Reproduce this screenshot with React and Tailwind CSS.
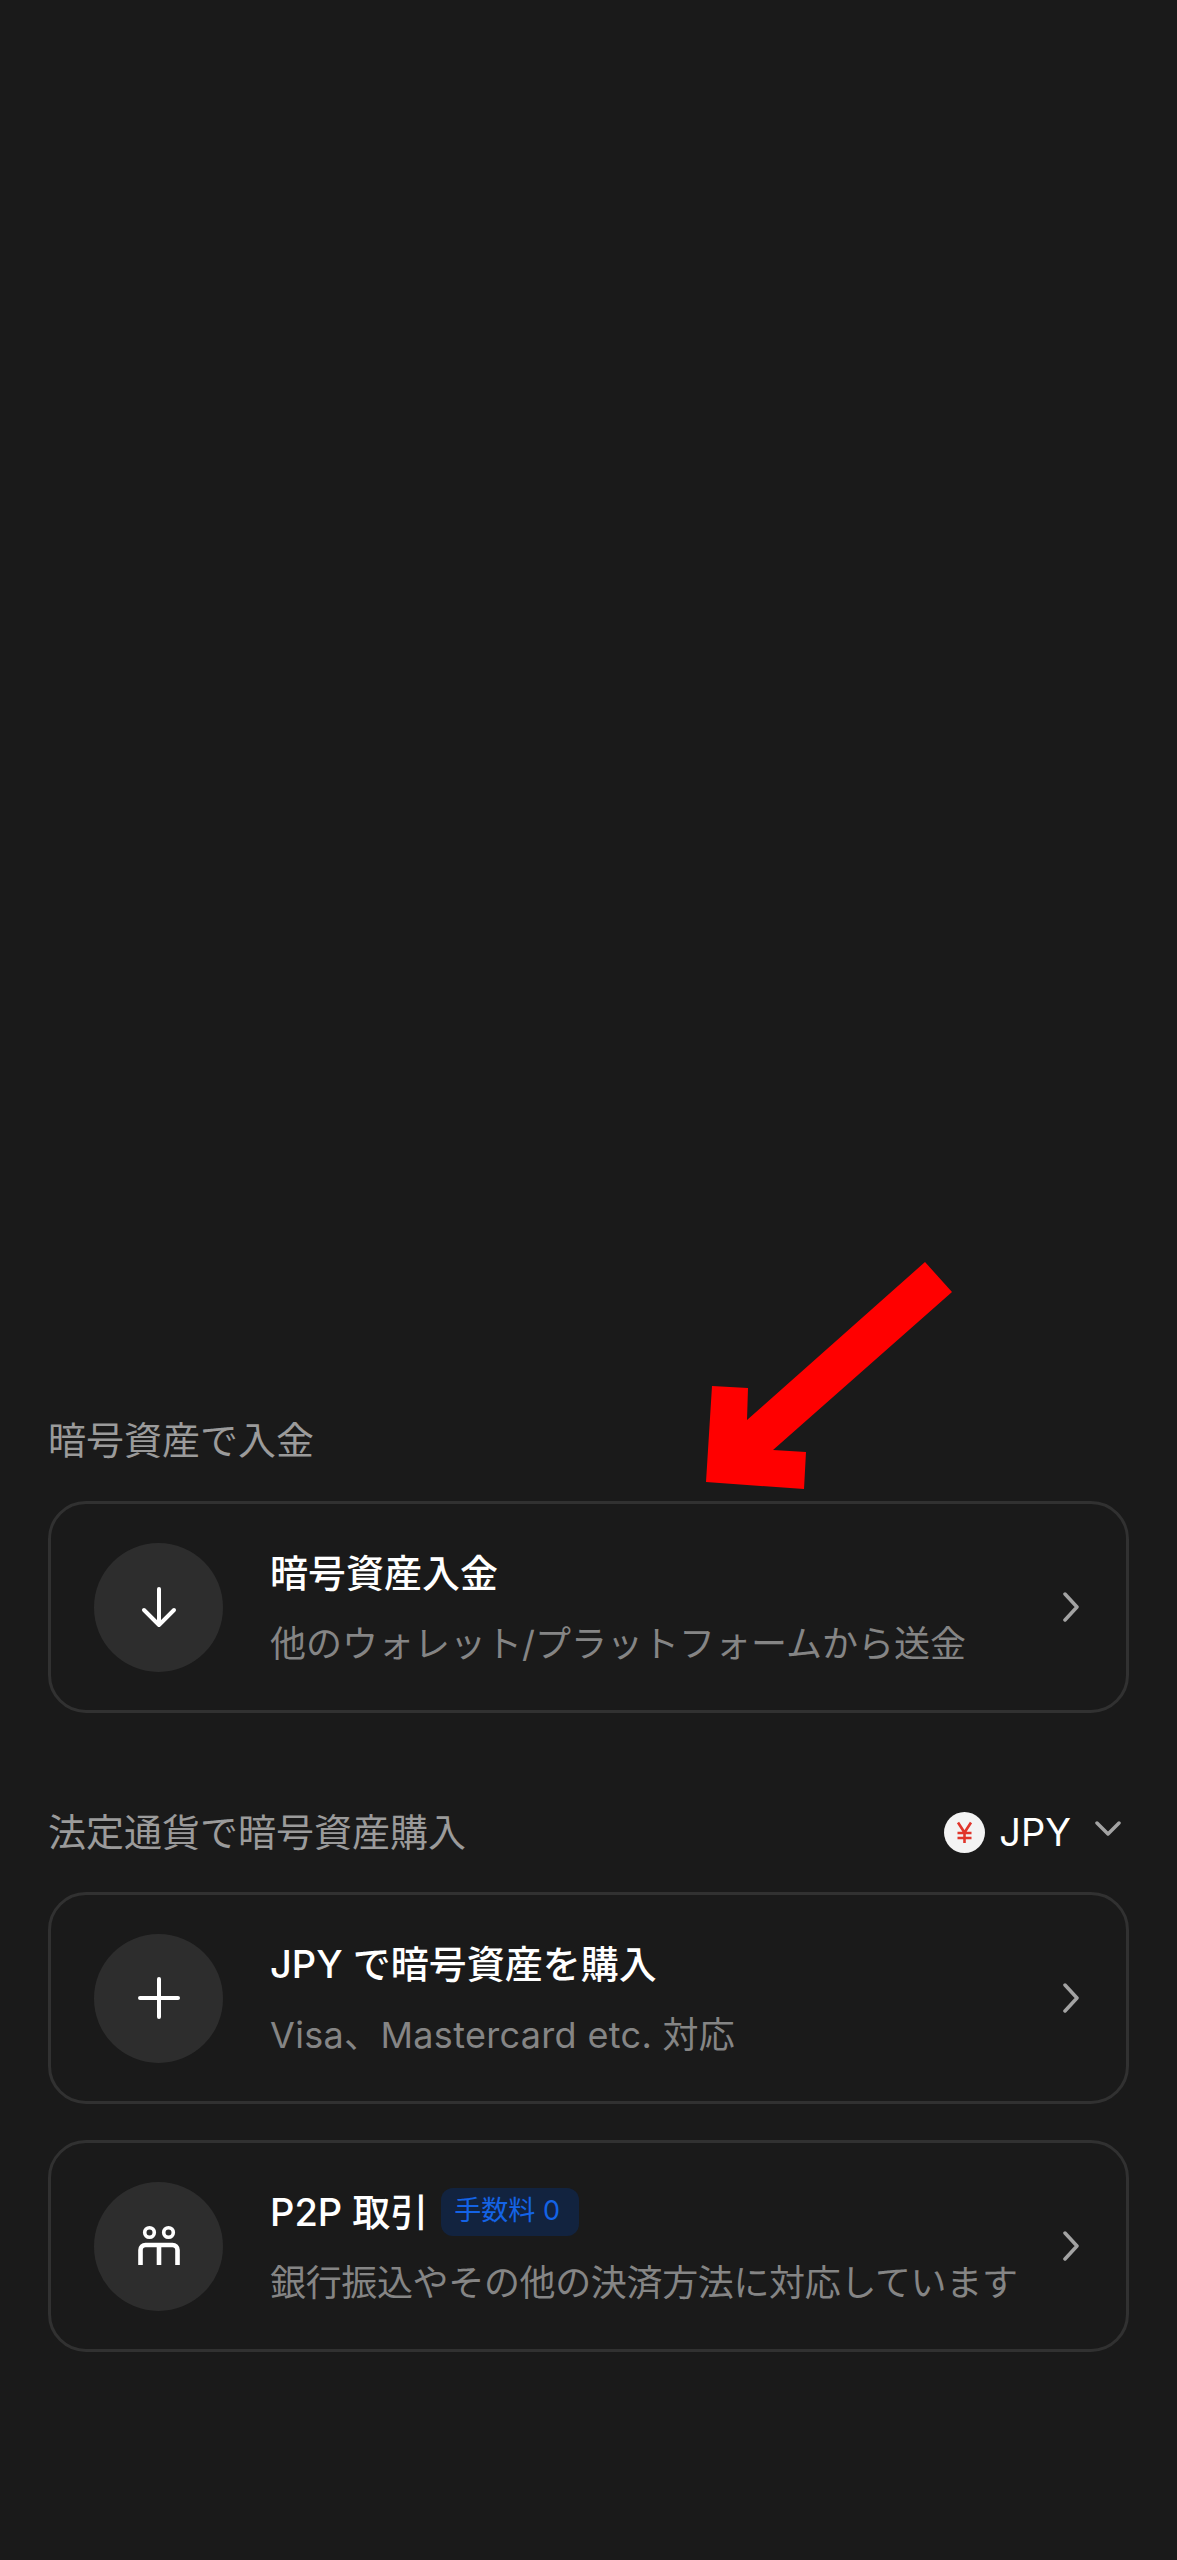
const FONT = "font-['Inter','Noto_Sans_CJK_JP',sans-serif]";

function ChevronRight() {
  return (
    <svg width="18" height="30" viewBox="0 0 18 30" fill="none" className="shrink-0">
      <path d="M3 2l12 13L3 28" stroke="#a3a3a3" strokeWidth="3.5" strokeLinecap="round" strokeLinejoin="round" />
    </svg>
  );
}

function ArrowDownIcon() {
  return (
    <svg width="40" height="42" viewBox="0 0 40 42" fill="none">
      <path d="M20 3v36M5 24l15 15 15-15" stroke="#fff" strokeWidth="4" strokeLinecap="round" strokeLinejoin="round" />
    </svg>
  );
}

function PlusIcon() {
  return (
    <svg width="42" height="42" viewBox="0 0 42 42" fill="none">
      <path d="M21 2v38M2 21h38" stroke="#fff" strokeWidth="4" strokeLinecap="round" />
    </svg>
  );
}

function PeopleIcon() {
  return (
    <svg width="44" height="42" viewBox="0 0 44 42" fill="none">
      <circle cx="12.5" cy="7.5" r="4.8" stroke="#fff" strokeWidth="3.6" />
      <circle cx="31.5" cy="7.5" r="4.8" stroke="#fff" strokeWidth="3.6" />
      <path d="M3.5 40V25a5 5 0 0 1 5-5h27a5 5 0 0 1 5 5v15M22 20v20" stroke="#fff" strokeWidth="4.6" />
    </svg>
  );
}

function YenIcon() {
  return (
    <svg width="41" height="41" viewBox="0 0 41 41" fill="none" className="shrink-0">
      <circle cx="20.5" cy="20.5" r="20.5" fill="#f3f3f3" />
      <path d="M14 10.5l6.5 10 6.5-10M20.5 20.5V31M13.5 21h14M13.5 26h14" stroke="#e0352b" strokeWidth="2.6" />
    </svg>
  );
}

function OptionCard({ icon, title, badge, subtitle, subtitleClass }) {
  return (
    <div className="flex h-[212px] items-center rounded-[38px] border-[3px] border-[#313131] pl-[43px] pr-[46px]">
      <div className="flex h-[129px] w-[129px] shrink-0 items-center justify-center rounded-full bg-[#2d2d2d]">
        {icon}
      </div>
      <div className="ml-[47px] min-w-0 flex-1">
        <div className="flex h-[52px] items-center">
          <span className="text-[38px] leading-[52px] font-medium whitespace-nowrap text-white">{title}</span>
          {badge && (
            <span className="ml-[13px] flex h-[48px] w-[138px] items-center rounded-[12px] bg-[#12233f] pl-[13px] text-[27px] text-[#1463e6]">
              {badge}
            </span>
          )}
        </div>
        <p className={`mt-[21px] text-[36px] leading-[48px] whitespace-nowrap text-[#858585] ${subtitleClass}`}>
          {subtitle}
        </p>
      </div>
      <ChevronRight />
    </div>
  );
}

export default function App() {
  return (
    <div className={`relative h-[2560px] bg-[#1a1a1a] px-[48px] pt-[1412px] ${FONT}`}>
      <h2 className="h-[56px] text-[38px] leading-[56px] font-normal text-[#9b9b9b]">暗号資産で入金</h2>
      <div className="mt-[33px]">
        <OptionCard
          icon={<ArrowDownIcon />}
          title="暗号資産入金"
          subtitle="他のウォレット/プラットフォームから送金"
        />
      </div>

      <div className="mt-[91px] flex h-[56px] items-center justify-between pr-[8px]">
        <h2 className="text-[38px] leading-[56px] font-normal text-[#9b9b9b]">法定通貨で暗号資産購入</h2>
        <div className="flex items-center">
          <YenIcon />
          <span className="ml-[14px] text-[38px] leading-[56px] text-white">JPY</span>
          <svg width="26" height="18" viewBox="0 0 26 18" fill="none" className="ml-[24px] mb-[6px]">
            <path d="M2 3l11 11L24 3" stroke="#a3a3a3" strokeWidth="3.5" strokeLinecap="round" strokeLinejoin="round" />
          </svg>
        </div>
      </div>

      <div className="mt-[32px] flex flex-col gap-[36px]">
        <OptionCard
          icon={<PlusIcon />}
          title="JPY で暗号資産を購入"
          subtitle="Visa、Mastercard etc. 対応"
          subtitleClass="tracking-[0.33px]"
        />
        <OptionCard
          icon={<PeopleIcon />}
          title="P2P 取引"
          badge="手数料 0"
          subtitle="銀行振込やその他の決済方法に対応しています"
          subtitleClass="tracking-[-0.35px]"
        />
      </div>

      {/* red annotation arrow laid over the page */}
      <svg width="1177" height="2560" viewBox="0 0 1177 2560" className="pointer-events-none absolute top-0 left-0">
        <polygon
          points="925,1262 952,1292 773,1450 806,1452 804,1489 706,1482 712,1386 748,1388 747,1420"
          fill="#ff0000"
        />
      </svg>
    </div>
  );
}
